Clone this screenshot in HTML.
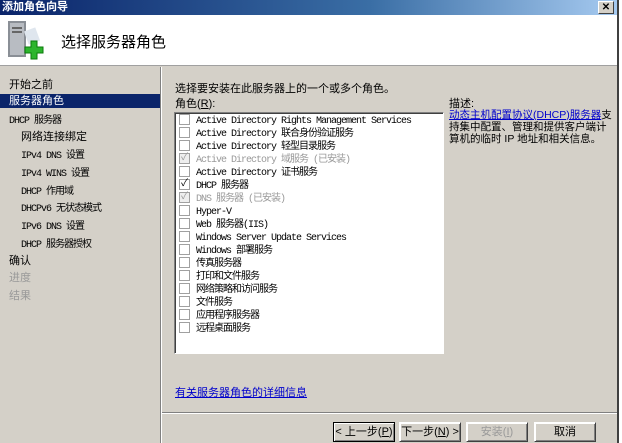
<!DOCTYPE html>
<html><head><meta charset="utf-8"><style>
*{margin:0;padding:0;box-sizing:border-box}
body{width:622px;height:443px;overflow:hidden;background:#d4d0c8;font-family:"Liberation Sans","Noto Sans CJK SC","WenQuanYi Zen Hei",sans-serif;font-size:11px;color:#000;position:relative}
.a{position:absolute;white-space:nowrap}
.m{font-family:"Liberation Mono","Noto Sans CJK SC",monospace;font-size:10px;letter-spacing:-1px}
.row{position:absolute;left:4px;height:13px;line-height:13px;white-space:nowrap}
.cb{display:inline-block;width:11px;height:11px;border:1px solid #a0a0a0;background:#fff;vertical-align:middle;margin-right:6px;position:relative;top:-1px;font-size:10px;line-height:9px;text-align:center;letter-spacing:0}
.g{color:#999}
.btn{position:absolute;top:422px;height:20px;width:62px;border:1px solid #000;background:#d4d0c8;box-shadow:inset 1px 1px #fff,inset -1px -1px #808080;text-align:center;line-height:18px;font-size:11px}
</style></head><body>
<div class="a" style="left:0;top:0;width:617px;height:15px;background:linear-gradient(90deg,#0a246a,#3a6ea5 60%,#a6caf0);color:#fff;font-weight:bold;font-size:11px;line-height:14px;padding-left:2px">添加角色向导</div>
<div class="a" style="left:598px;top:1px;width:16px;height:13px;background:#d4d0c8;border:1px solid #fff;border-right-color:#404040;border-bottom-color:#404040;font-size:10px;line-height:11px;text-align:center;font-weight:bold">✕</div>
<div class="a" style="left:617px;top:0;width:2px;height:443px;background:#404040"></div>
<div class="a" style="left:619px;top:0;width:3px;height:443px;background:#fff"></div>
<div class="a" style="left:0;top:15px;width:617px;height:51px;background:#fff;border-bottom:1px solid #a0a0a0"></div>
<svg class="a" style="left:6px;top:19px" width="42" height="42" viewBox="0 0 42 42"><rect x="2" y="2" width="18" height="36" fill="#8a8f96"/><rect x="4" y="4" width="14" height="32" fill="#b8bcc2"/><rect x="6" y="8" width="10" height="2" fill="#666"/><rect x="6" y="12" width="10" height="2" fill="#666"/><rect x="20" y="10" width="12" height="14" fill="#dfe6ee" transform="rotate(-20 26 17)"/><path d="M25 22h6v6h6v6h-6v6h-6v-6h-6v-6h6z" fill="#2db52d" stroke="#0a7a0a"/></svg>
<div class="a" style="left:61px;top:31px;font-size:15px">选择服务器角色</div>
<div class="a" style="left:0;top:67px;width:160px;height:376px;background:#d4d0c8"></div>
<div class="a" style="left:160px;top:67px;width:1px;height:376px;background:#808080"></div>
<div class="a" style="left:161px;top:67px;width:1px;height:376px;background:#fff"></div>
<div class="a" style="left:9px;top:76px">开始之前</div>
<div class="a" style="left:0;top:94px;width:160px;height:14px;background:#0a246a;color:#fff;padding-left:9px;line-height:14px">服务器角色</div>
<div class="a m" style="left:9px;top:111px">DHCP 服务器</div>
<div class="a" style="left:21px;top:128px">网络连接绑定</div>
<div class="a m" style="left:21px;top:146px">IPv4 DNS 设置</div>
<div class="a m" style="left:21px;top:164px">IPv4 WINS 设置</div>
<div class="a m" style="left:21px;top:182px">DHCP 作用域</div>
<div class="a m" style="left:21px;top:199px">DHCPv6 无状态模式</div>
<div class="a m" style="left:21px;top:217px">IPv6 DNS 设置</div>
<div class="a m" style="left:21px;top:235px">DHCP 服务器授权</div>
<div class="a" style="left:9px;top:252px">确认</div>
<div class="a g" style="left:9px;top:269px">进度</div>
<div class="a g" style="left:9px;top:287px">结果</div>
<div class="a" style="left:175px;top:80px">选择要安装在此服务器上的一个或多个角色。</div>
<div class="a" style="left:175px;top:95px">角色(<u>R</u>):</div>
<div class="a" style="left:174px;top:112px;width:270px;height:242px;background:#fff;border:1px solid #808080;border-right-color:#fff;border-bottom-color:#fff;box-shadow:inset 1px 1px #404040">
<div class="row m" style="top:2px"><span class="cb"></span>Active Directory Rights Management Services</div>
<div class="row m" style="top:15px"><span class="cb"></span>Active Directory 联合身份验证服务</div>
<div class="row m" style="top:28px"><span class="cb"></span>Active Directory 轻型目录服务</div>
<div class="row m g" style="top:41px"><span class="cb g" style="background:#eee">✓</span>Active Directory 域服务  (已安装)</div>
<div class="row m" style="top:54px"><span class="cb"></span>Active Directory 证书服务</div>
<div class="row m" style="top:67px"><span class="cb">✓</span>DHCP 服务器</div>
<div class="row m g" style="top:80px"><span class="cb g" style="background:#eee">✓</span>DNS 服务器  (已安装)</div>
<div class="row m" style="top:93px"><span class="cb"></span>Hyper-V</div>
<div class="row m" style="top:106px"><span class="cb"></span>Web 服务器(IIS)</div>
<div class="row m" style="top:119px"><span class="cb"></span>Windows Server Update Services</div>
<div class="row m" style="top:132px"><span class="cb"></span>Windows 部署服务</div>
<div class="row m" style="top:145px"><span class="cb"></span>传真服务器</div>
<div class="row m" style="top:158px"><span class="cb"></span>打印和文件服务</div>
<div class="row m" style="top:171px"><span class="cb"></span>网络策略和访问服务</div>
<div class="row m" style="top:184px"><span class="cb"></span>文件服务</div>
<div class="row m" style="top:197px"><span class="cb"></span>应用程序服务器</div>
<div class="row m" style="top:210px"><span class="cb"></span>远程桌面服务</div>
</div>
<div class="a" style="left:449px;top:95px">描述:</div>
<div class="a" style="left:449px;top:109px;width:166px;white-space:normal;line-height:12px;font-size:10.5px"><span style="color:#00c;text-decoration:underline">动态主机配置协议(DHCP)服务器</span>支持集中配置、管理和提供客户端计算机的临时 IP 地址和相关信息。</div>
<div class="a" style="left:175px;top:384px;color:#00c;text-decoration:underline">有关服务器角色的详细信息</div>
<div class="a" style="left:162px;top:412px;width:455px;height:1px;background:#808080"></div>
<div class="a" style="left:162px;top:413px;width:455px;height:1px;background:#fff"></div>
<div class="btn" style="left:333px">&lt; 上一步(<u>P</u>)</div>
<div class="btn" style="left:399px;border-color:#fff #404040 #404040 #fff">下一步(<u>N</u>) &gt;</div>
<div class="btn" style="left:466px;border-color:#fff #404040 #404040 #fff;color:#999">安装(<u>I</u>)</div>
<div class="btn" style="left:534px;border-color:#fff #404040 #404040 #fff">取消</div>
</body></html>
